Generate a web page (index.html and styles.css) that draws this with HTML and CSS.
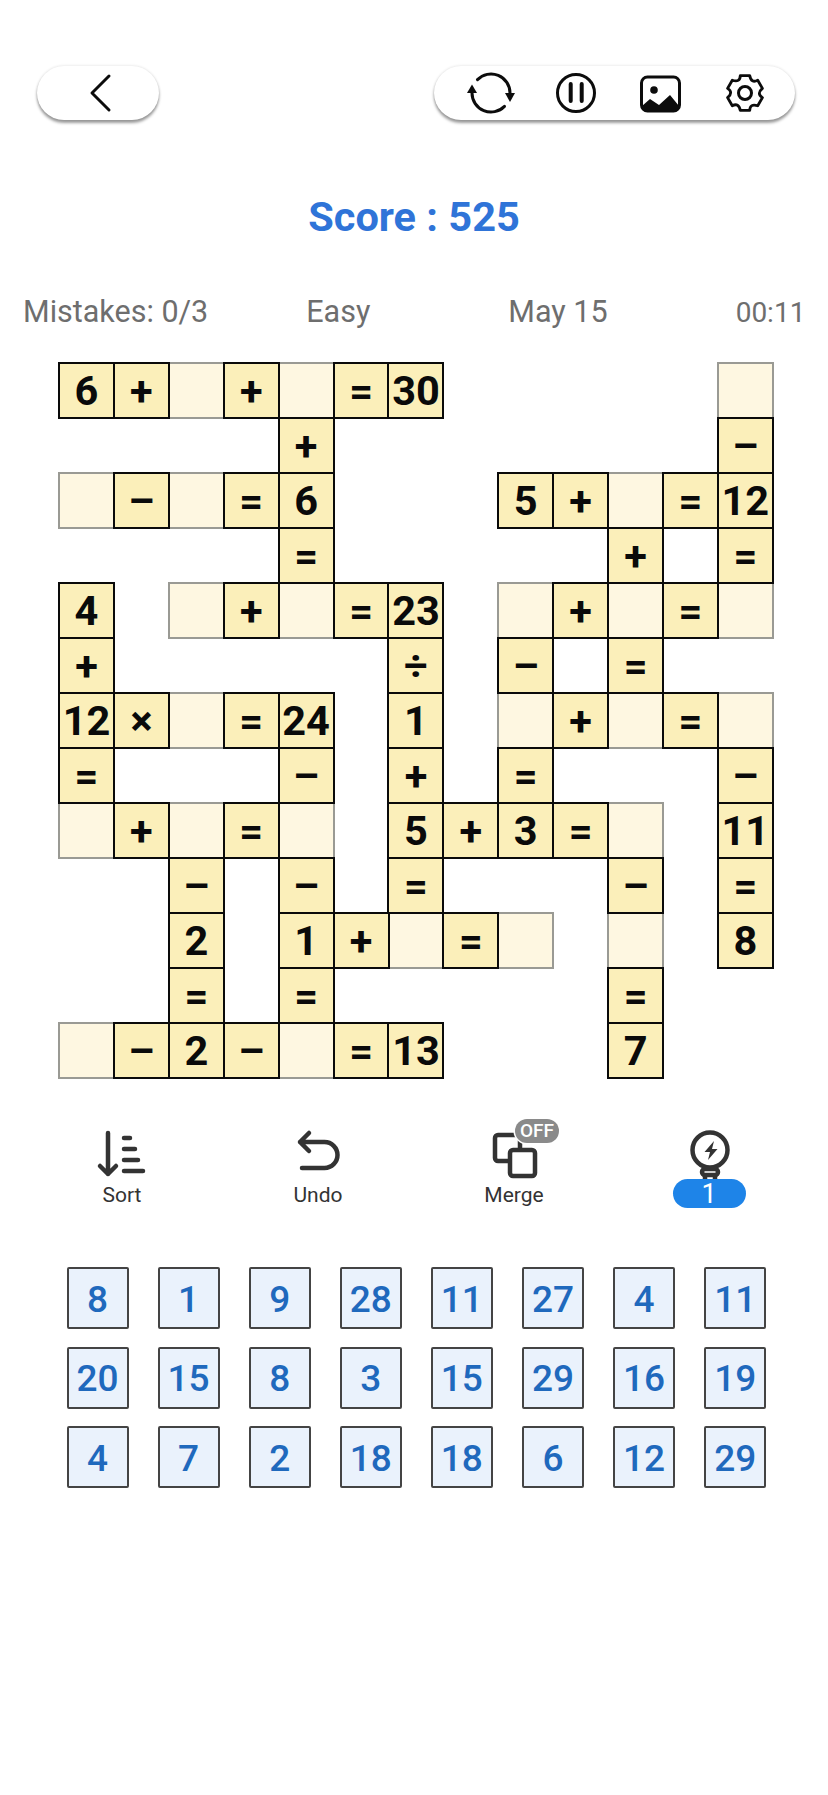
FILE: index.html
```html
<!DOCTYPE html>
<html lang="en">
<head>
<meta charset="utf-8">
<title>Math Crossword</title>
<link rel="stylesheet" href="styles.css">
</head>
<body>
<header class="topbar">
  <button class="pill back" aria-label="Back">
    <svg class="ic" viewBox="0 0 44 44"><path d="M33 5 16 22 33 39" class="line"/></svg>
  </button>
  <div class="pill actions">
    <svg class="ic" viewBox="0 0 44 44"><path class="line" d="M7.500 8.600A19 19 0 0 1 40 22"/><path class="line" d="M2 22A19 19 0 0 0 34.500 35.400"/><path class="solid" d="M35 22H45L40 31Z"/><path class="solid" d="M-3 22H7L2 13.500Z"/></svg>
    <svg class="ic" viewBox="0 0 44 44"><circle class="line" cx="22" cy="22" r="18.500"/><path class="line bars" d="M16.700 13V30M27.700 13V30"/></svg>
    <svg class="ic" viewBox="0 0 44 44"><rect class="line" x="3.500" y="6" width="38" height="34" rx="6"/><circle class="solid" cx="16" cy="19" r="3.800"/><path class="solid" d="M4 35 12 28 21 34 32 24 41 35A4 4 0 0 1 37 39.500H8A4 4 0 0 1 4 35Z"/></svg>
    <svg class="ic" viewBox="0 0 44 44"><g transform="translate(22 22) scale(.94) translate(-22 -22)"><path class="line" d="M17 3.500 27 3.500Q28.660 12 35.520 8.420L40.520 17.080Q33.990 22.770 40.520 26.920L35.520 35.580Q27.330 32.770 27 40.500L17 40.500Q15.340 32 8.480 35.580L3.480 26.920Q10.010 21.230 3.480 17.080L8.480 8.420Q16.670 11.230 17 3.500Z"/></g><circle class="line" cx="22" cy="22" r="6.500"/></svg>
  </div>
</header>

<h1 class="score">Score : 525</h1>

<div class="info">
  <span class="mistakes">Mistakes: 0/3</span>
  <span class="level">Easy</span>
  <span class="date">May 15</span>
  <span class="time">00:11</span>
</div>

<main class="board">
  <div class="g">6</div><div class="g">+</div><div class="o"></div><div class="g">+</div><div class="o"></div><div class="g">=</div><div class="g">30</div><div></div><div></div><div></div><div></div><div></div><div class="o"></div>
  <div></div><div></div><div></div><div></div><div class="g">+</div><div></div><div></div><div></div><div></div><div></div><div></div><div></div><div class="g">–</div>
  <div class="o"></div><div class="g">–</div><div class="o"></div><div class="g">=</div><div class="g">6</div><div></div><div></div><div></div><div class="g">5</div><div class="g">+</div><div class="o"></div><div class="g">=</div><div class="g">12</div>
  <div></div><div></div><div></div><div></div><div class="g">=</div><div></div><div></div><div></div><div></div><div></div><div class="g">+</div><div></div><div class="g">=</div>
  <div class="g">4</div><div></div><div class="o"></div><div class="g">+</div><div class="o"></div><div class="g">=</div><div class="g">23</div><div></div><div class="o"></div><div class="g">+</div><div class="o"></div><div class="g">=</div><div class="o"></div>
  <div class="g">+</div><div></div><div></div><div></div><div></div><div></div><div class="g">÷</div><div></div><div class="g">–</div><div></div><div class="g">=</div><div></div><div></div>
  <div class="g">12</div><div class="g">×</div><div class="o"></div><div class="g">=</div><div class="g">24</div><div></div><div class="g">1</div><div></div><div class="o"></div><div class="g">+</div><div class="o"></div><div class="g">=</div><div class="o"></div>
  <div class="g">=</div><div></div><div></div><div></div><div class="g">–</div><div></div><div class="g">+</div><div></div><div class="g">=</div><div></div><div></div><div></div><div class="g">–</div>
  <div class="o"></div><div class="g">+</div><div class="o"></div><div class="g">=</div><div class="o"></div><div></div><div class="g">5</div><div class="g">+</div><div class="g">3</div><div class="g">=</div><div class="o"></div><div></div><div class="g">11</div>
  <div></div><div></div><div class="g">–</div><div></div><div class="g">–</div><div></div><div class="g">=</div><div></div><div></div><div></div><div class="g">–</div><div></div><div class="g">=</div>
  <div></div><div></div><div class="g">2</div><div></div><div class="g">1</div><div class="g">+</div><div class="o"></div><div class="g">=</div><div class="o"></div><div></div><div class="o"></div><div></div><div class="g">8</div>
  <div></div><div></div><div class="g">=</div><div></div><div class="g">=</div><div></div><div></div><div></div><div></div><div></div><div class="g">=</div><div></div><div></div>
  <div class="o"></div><div class="g">–</div><div class="g">2</div><div class="g">–</div><div class="o"></div><div class="g">=</div><div class="g">13</div><div></div><div></div><div></div><div class="g">7</div><div></div><div></div>
</main>

<nav class="tools">
  <div class="tool">
    <svg class="tool-ic" viewBox="0 0 80 64"><path d="M26 15V56M18 48 26 56 34 48M42 20H48M42 31H53M42 42H56M42 53H61"/></svg>
    <span class="label">Sort</span>
  </div>
  <div class="tool">
    <svg class="tool-ic" viewBox="0 0 80 64"><path d="M31 15 22 24 31 33M22 24H46.500A13 13 0 0 1 46.500 50H24"/></svg>
    <span class="label">Undo</span>
  </div>
  <div class="tool">
    <svg class="tool-ic" viewBox="0 0 80 64"><rect x="21" y="17" width="25" height="26" rx="3"/><rect class="front" x="36" y="32" width="25" height="26" rx="3"/></svg>
    <span class="off">OFF</span>
    <span class="label">Merge</span>
  </div>
  <div class="tool">
    <svg class="tool-ic" viewBox="0 0 80 64"><circle cx="40" cy="32" r="17.500"/><path class="fillbolt" d="M44 23 34.500 34H40L38 42 47.500 31H42Z"/><path d="M35 50V62M45 50V62"/><rect class="front" x="32" y="51" width="16" height="6" rx="3"/></svg>
    <span class="hint">1</span>
  </div>
</nav>

<section class="tiles">
  <div class="tile">8</div><div class="tile">1</div><div class="tile">9</div><div class="tile">28</div><div class="tile">11</div><div class="tile">27</div><div class="tile">4</div><div class="tile">11</div>
  <div class="tile">20</div><div class="tile">15</div><div class="tile">8</div><div class="tile">3</div><div class="tile">15</div><div class="tile">29</div><div class="tile">16</div><div class="tile">19</div>
  <div class="tile">4</div><div class="tile">7</div><div class="tile">2</div><div class="tile">18</div><div class="tile">18</div><div class="tile">6</div><div class="tile">12</div><div class="tile">29</div>
</section>
</body>
</html>
```
FILE: styles.css
```css
* { box-sizing: border-box; }
html, body { margin: 0; padding: 0; }
body {
  width: 828px;
  height: 1795px;
  background: #fff;
  font-family: Roboto, "Liberation Sans", sans-serif;
  overflow: hidden;
}

/* top bar */
.topbar {
  display: flex;
  justify-content: space-between;
  padding: 66px 33px 0 37px;
}
.pill {
  height: 54px;
  border: 0;
  border-radius: 27px;
  background: #fff;
  box-shadow: 0 3px 3px rgba(0, 0, 0, .38), 0 0 3px rgba(0, 0, 0, .14);
  display: flex;
  align-items: center;
  padding: 0;
}
.back { width: 122px; justify-content: center; }
.actions { width: 361px; padding-left: 35.5px; gap: 40.4px; }
.ic { width: 44px; height: 44px; overflow: visible; flex: none; }
.line { fill: none; stroke: #0c0c0c; stroke-width: 3; stroke-linecap: round; stroke-linejoin: round; }
.bars { stroke-width: 4; }
.solid { fill: #0c0c0c; }

/* score + info */
.score {
  margin: 73px 0 0;
  text-align: center;
  font-size: 41.5px;
  line-height: 48px;
  font-weight: 700;
  color: #2f74d8;
}
.info {
  display: flex;
  align-items: baseline;
  margin-top: 53px;
  padding-left: 23px;
  font-size: 30.5px;
  line-height: 36px;
  font-weight: 400;
  color: #6e6e6e;
  white-space: nowrap;
}
.level { margin-left: 98px; }
.date { margin-left: 138px; }
.time { margin-left: 128px; font-size: 28px; }

/* board */
.board {
  display: grid;
  grid-template-columns: repeat(13, 54.92px);
  grid-auto-rows: 55px;
  margin: 31px 0 0 58px;
  height: 717px;
}
.g, .o {
  width: 57px;
  height: 57px;
  display: flex;
  align-items: center;
  justify-content: center;
  position: relative;
}
.g {
  z-index: 2;
  background: #fbefba;
  border: 2px solid #0a0a0a;
  color: #0a0a0a;
  font-size: 41.5px;
  font-weight: 700;
}
.o {
  z-index: 1;
  background: #fef7e1;
  border: 2px solid #9a9a94;
}

/* tools */
.tools {
  display: grid;
  grid-template-columns: repeat(4, 196px);
  margin: 39px 0 0 24px;
}
.tool {
  display: flex;
  flex-direction: column;
  align-items: center;
  position: relative;
  height: 94px;
}
.tool-ic {
  width: 80px;
  height: 64px;
  flex: none;
  fill: none;
  stroke: #333;
  stroke-width: 4.5;
  stroke-linecap: round;
  stroke-linejoin: round;
}
.front { fill: #fff; }
.fillbolt { fill: #333; stroke: none; }
.label {
  font-size: 21px;
  line-height: 24px;
  margin-top: 1px;
  color: #333;
}
.off {
  position: absolute;
  left: 99px;
  top: 1px;
  width: 44px;
  height: 24px;
  border-radius: 12px;
  background: #8a8a8a;
  box-shadow: 0 0 0 1.5px #fff;
  color: #fff;
  font-size: 19px;
  line-height: 24px;
  font-weight: 500;
  text-align: center;
}
.hint {
  width: 73px;
  height: 29px;
  margin: -3px 2px 0 0;
  border-radius: 15px;
  background: #1e84e8;
  color: #fff;
  font-size: 27px;
  line-height: 30px;
  text-align: center;
  position: relative;
}

/* number tiles */
.tiles {
  display: grid;
  grid-template-columns: repeat(8, 62px);
  grid-auto-rows: 62px;
  column-gap: 29.1px;
  row-gap: 17.5px;
  margin: 55px 0 0 66.5px;
}
.tile {
  display: flex;
  align-items: center;
  justify-content: center;
  padding-top: 2px;
  background: #eaf2fc;
  border: 2px solid #444;
  border-radius: 2px;
  color: #1f69bd;
  font-size: 37px;
  font-weight: 500;
}
```
